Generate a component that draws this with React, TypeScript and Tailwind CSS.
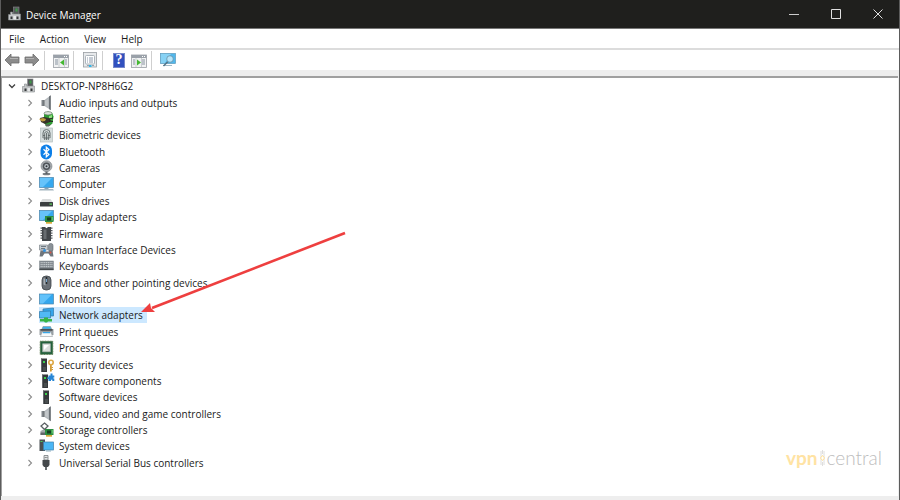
import React from "react";

type Glyph = () => React.ReactElement;

const Svg = ({ children }: { children: React.ReactNode }) => (
  <svg viewBox="0 0 16 16" className="size-4 shrink-0" aria-hidden="true">
    {children}
  </svg>
);

const Root: Glyph = () => (
  <Svg>
    <rect x="6.500" y="1" width="5.500" height="7.500" fill="#55585a" stroke="#8a8d8f" strokeWidth=".6" />
    <rect x="8.500" y="2.500" width="2" height="3" fill="#3f9a48" />
    <path d="M1.500 8.500h2V6h2v2h8v6h-12z" fill="#c3c5c7" stroke="#85898c" strokeWidth=".6" />
    <path d="M3.500 10.500h2V13h-2zM9.500 10.500h2V13h-2z" fill="#35383a" />
    <path d="M6.500 10H9v3.500H6.500z" fill="#e6e8e9" />
  </Svg>
);

const Speaker: Glyph = () => (
  <Svg>
    <path d="M2.500 5h3v6h-3z" fill="#80858a" />
    <path d="M5.500 5l6-4.500v14.500l-6-4z" fill="#b3b8bc" />
    <path d="M10 1.600l1.800-1.300v15L10 14z" fill="#6a6f74" />
    <path d="M6 6l3-2v7.500L6 10z" fill="#c2c6c9" />
    <path d="M5 5v6" stroke="#5d6266" strokeWidth=".8" />
  </Svg>
);

const Battery: Glyph = () => (
  <Svg>
    <path d="M5 2l4-1.500 4 1 1.500 4-1 7-3 2.500H7L5 11z" fill="#2f9e33" />
    <ellipse cx="9" cy="2.300" rx="4" ry="1.700" fill="#dbe3da" stroke="#667066" strokeWidth=".6" />
    <path d="M10 5l3-1v4l-3 1z" fill="#8de07c" />
    <path d="M6 13.500l6-.5-2 2.500H7z" fill="#5b675c" />
    <path d="M1 7l4-1 5 1 2 2-1 2-5 2-4-2z" fill="#37332a" />
    <path d="M0 8l4-1 3 1-1 2-3 .5z" fill="#c19c3e" />
    <path d="M10 8l4-1M10 10l4 .5" stroke="#222" strokeWidth="1" />
  </Svg>
);

const Finger: Glyph = () => (
  <Svg>
    <rect x="1.500" y="1" width="12" height="14" fill="#d5dddd" stroke="#b4bebe" strokeWidth=".7" />
    <path d="M4 11V6a3.500 3.500 0 0 1 7 0v5M5.700 13V6.500a1.800 1.800 0 0 1 3.600 0V13M7.500 6v7M4 8.500h2M9 8.500h2M4.500 11h6" fill="none" stroke="#5d6868" strokeWidth=".9" />
  </Svg>
);

const Bluetooth: Glyph = () => (
  <Svg>
    <rect x="1.500" y=".5" width="11.500" height="15" rx="5.700" fill="#0c7fe8" />
    <path d="M4.500 5.300l5.400 5.200-2.600 2.300V3.200l2.600 2.300-5.400 5.200" fill="none" stroke="#fff" strokeWidth="1.200" />
  </Svg>
);

const Camera: Glyph = () => (
  <Svg>
    <ellipse cx="7.500" cy="14" rx="4" ry="1.300" fill="#777c80" />
    <path d="M6.500 11h2v3h-2z" fill="#5d6266" />
    <circle cx="7.500" cy="6.200" r="5.500" fill="#a4a9ad" stroke="#7b8084" strokeWidth=".6" />
    <circle cx="7.500" cy="6.200" r="3.700" fill="#4e5358" />
    <circle cx="7.500" cy="6.200" r="2.200" fill="#bcc3c9" />
    <circle cx="7.500" cy="6.200" r="1" fill="#30353a" />
  </Svg>
);

const Screen = () => (
  <>
    <rect x=".5" y="1.500" width="14" height="10" fill="#36a8ee" stroke="#4d87ad" strokeWidth=".7" />
    <path d="M1 2h12L4 11H1z" fill="#66c3fa" />
  </>
);

const Computer: Glyph = () => (
  <Svg>
    <Screen />
    <path d="M5.500 12h4v1h-4z" fill="#83a2b5" />
    <path d="M1 13h13l1 1.500H0z" fill="#a3b5c0" />
  </Svg>
);

const Disk: Glyph = () => (
  <Svg>
    <path d="M3.500 6h8l2.500 3.500H1z" fill="#d9dbdc" />
    <rect x="1" y="9" width="13" height="4.500" rx=".5" fill="#3b3e40" />
    <rect x="10.500" y="10.500" width="2.500" height="1.200" fill="#5fd45b" />
  </Svg>
);

const Chip = () => (
  <>
    <rect x="6" y="7" width="8.500" height="6" fill="#2c8f42" />
    <rect x="8" y="8.500" width="4" height="3" fill="#153f22" />
    <rect x="12.700" y="8" width="1" height="3.500" fill="#6fd47b" />
    <path d="M7 13h6v1.700H7z" fill="#d9a93a" />
  </>
);

const Display: Glyph = () => (
  <Svg>
    <Screen />
    <Chip />
  </Svg>
);

const Firmware: Glyph = () => (
  <Svg>
    <path d="M1.500 1.500h2v1.300h-2zM1.500 4h2v1.300h-2zM1.500 6.500h2v1.300h-2zM1.500 9h2v1.300h-2zM1.500 11.500h2v1.300h-2zM11.500 1.500h2v1.300h-2zM11.500 4h2v1.300h-2zM11.500 6.500h2v1.300h-2zM11.500 9h2v1.300h-2zM11.500 11.500h2v1.300h-2z" fill="#555a5e" />
    <path d="M3 1h3l1.500 1.300L9 1h3v14H3z" fill="#43474b" />
    <path d="M4.500 3.500h3V13h-3z" fill="#686d71" />
  </Svg>
);

const Hid: Glyph = () => (
  <Svg>
    <path d="M.5 3h8v5h-8z" fill="#c8cdd1" stroke="#80878c" strokeWidth=".7" />
    <path d="M2 4h5v1H2zM2 6h4v1H2z" fill="#6f7a83" />
    <rect x="9.500" y="1.500" width="4.500" height="8" rx="2" fill="#8b9298" stroke="#60676d" strokeWidth=".6" />
    <path d="M.5 14.500l1-6h3l1 1h4l1-1h3l1 6h-3l-2-3h-4l-2 3z" fill="#70767c" />
    <circle cx="5.500" cy="8.500" r="1.500" fill="#3290df" />
    <circle cx="11.500" cy="10.500" r="1" fill="#d95548" />
  </Svg>
);

const Keyboard: Glyph = () => (
  <Svg>
    <rect x=".5" y="3" width="14" height="9" fill="#7d848a" stroke="#8d9499" strokeWidth=".6" />
    <path d="M1.500 4.700h12M1.500 6.700h12M1.500 8.700h12" stroke="#d0d5d9" strokeWidth="1" strokeDasharray="1.300 .5" />
    <path d="M.5 10.500h14V12H.500z" fill="#464b4f" />
  </Svg>
);

const Mouse: Glyph = () => (
  <Svg>
    <rect x="3" y="1" width="9" height="14" rx="4" fill="#6a7076" stroke="#3f454a" strokeWidth=".8" />
    <path d="M4.500 3.500h2v7l-2-1z" fill="#a4abb1" />
    <path d="M7.500 2v7" stroke="#252a2e" strokeWidth="1.500" />
    <rect x="7" y="4" width="1" height="3" fill="#76a8d0" />
  </Svg>
);

const Monitor: Glyph = () => (
  <Svg>
    <rect x=".5" y="3" width="14" height="10" fill="#33a7ee" stroke="#4d87ad" strokeWidth=".7" />
    <path d="M1 3.500h12L4 12.500H1z" fill="#62c2fa" />
  </Svg>
);

const Network: Glyph = () => (
  <Svg>
    <path d="M4 2l10.500-1v8L4 9z" fill="#35a5ea" stroke="#2f78a8" strokeWidth=".7" />
    <path d="M.5 4.500l11-.5v7H.500z" fill="#51b9f5" stroke="#2f78a8" strokeWidth=".7" />
    <path d="M5 10.500h4V12h4v2.500H9l-1 1h-2l-1-1H1V12h4z" fill="#35b445" />
  </Svg>
);

const Printer: Glyph = () => (
  <Svg>
    <path d="M4 2.500h7.500l1 2.500h-9.500z" fill="#39b1ec" stroke="#8a9297" strokeWidth=".6" />
    <path d="M.5 5h14v6H.500z" fill="#9aa0a4" />
    <path d="M1.500 5h12v1.800h-12z" fill="#4b5156" />
    <path d="M3 8h9l1.500 4.500h-12z" fill="#f7f9fa" stroke="#868c91" strokeWidth=".5" />
    <path d="M4 8h7l.4 1.300H3.600z" fill="#38a7e8" />
  </Svg>
);

const Processor: Glyph = () => (
  <Svg>
    <rect x="1.200" y="1.200" width="12.600" height="13.200" fill="#24613d" stroke="#5f7d52" strokeWidth="1" strokeDasharray="1 .6" />
    <rect x="3.700" y="3.800" width="7.600" height="8" fill="#dcdfdd" stroke="#a8b1ab" strokeWidth=".7" />
    <path d="M5 5h5l-5 5z" fill="#fff" />
  </Svg>
);

const Tower = ({ x = 3 }: { x?: number }) => (
  <>
    <rect x={x} y="1.500" width="6" height="13.500" fill="#36393b" />
    <path d={`M${x} 1.500h1V15h-1z`} fill="#65696c" />
    <rect x={x + 2} y="4" width="2" height="2" fill="#3dcf4c" />
    <path d={`M${x + 2} 11h3M${x + 2} 13h3`} stroke="#7b7f82" strokeWidth=".6" />
  </>
);

const Security: Glyph = () => (
  <Svg>
    <Tower x={2} />
    <path d="M11 7h1.800v7l-.9 1-.9-1z" fill="#d29a35" />
    <circle cx="12" cy="5.500" r="2.200" fill="none" stroke="#dda947" strokeWidth="1.600" />
    <path d="M12.500 10h1.500v1h-1.500zM12.500 12h1.500v1h-1.500z" fill="#d29a35" />
  </Svg>
);

const Component: Glyph = () => (
  <Svg>
    <Tower />
    <path d="M9.500 2.500h2V.500h2v2h1.800v2h-1v1h1V8h-2V6.800h-1.300V8H9.500V6H8.300V4.300h1.200z" fill="#2685d5" />
  </Svg>
);

const Software: Glyph = () => (
  <Svg>
    <Tower x={4} />
  </Svg>
);

const Storage: Glyph = () => (
  <Svg>
    <path d="M5.500 1L9 4 5.500 7.500 2 4z" fill="#fff" stroke="#5b6063" strokeWidth="1.300" />
    <path d="M1.500 9l3-1.500L8 9v4H1.500z" fill="#a3a8ab" />
    <path d="M1.500 10.500H7V13H1.500z" fill="#63686b" />
    <Chip />
  </Svg>
);

const System: Glyph = () => (
  <Svg>
    <rect x=".5" y="1.500" width="5.500" height="11.500" fill="#4a5054" />
    <rect x="1.500" y="3" width="2" height="1" fill="#51ce5c" />
    <rect x="4.500" y="4" width="10" height="8" fill="#4bb6f5" stroke="#3f80ac" strokeWidth=".7" />
    <path d="M7 12.500h5v1H7z" fill="#8faebf" />
  </Svg>
);

const Usb: Glyph = () => (
  <Svg>
    <path d="M5 .5h4V5H5z" fill="#e2e4e5" stroke="#777c7f" strokeWidth=".8" />
    <path d="M5.800 2h.8v1h-.8zM7.500 2h.8v1h-.8z" fill="#555" />
    <path d="M3.500 5h7v5L9 12H5l-1.500-2z" fill="#45494c" />
    <path d="M6 12h2v3H6z" fill="#696e71" />
  </Svg>
);

const devices: { name: string; Icon: Glyph; selected?: boolean }[] = [
  { name: "Audio inputs and outputs", Icon: Speaker },
  { name: "Batteries", Icon: Battery },
  { name: "Biometric devices", Icon: Finger },
  { name: "Bluetooth", Icon: Bluetooth },
  { name: "Cameras", Icon: Camera },
  { name: "Computer", Icon: Computer },
  { name: "Disk drives", Icon: Disk },
  { name: "Display adapters", Icon: Display },
  { name: "Firmware", Icon: Firmware },
  { name: "Human Interface Devices", Icon: Hid },
  { name: "Keyboards", Icon: Keyboard },
  { name: "Mice and other pointing devices", Icon: Mouse },
  { name: "Monitors", Icon: Monitor },
  { name: "Network adapters", Icon: Network, selected: true },
  { name: "Print queues", Icon: Printer },
  { name: "Processors", Icon: Processor },
  { name: "Security devices", Icon: Security },
  { name: "Software components", Icon: Component },
  { name: "Software devices", Icon: Software },
  { name: "Sound, video and game controllers", Icon: Speaker },
  { name: "Storage controllers", Icon: Storage },
  { name: "System devices", Icon: System },
  { name: "Universal Serial Bus controllers", Icon: Usb },
];

const Arrow = () => (
  <svg viewBox="0 0 208 88" className="pointer-events-none absolute bottom-2 left-[136px] z-10 h-[88px] w-[208px]" aria-hidden="true">
    <path d="M14 80L207 5" stroke="#ee3f3f" strokeWidth="2.600" />
    <path d="M3 84l9-9 1 5 4 4z" fill="#ee3f3f" />
  </svg>
);

const NavArrow = ({ flip }: { flip?: boolean }) => (
  <Svg>
    <path
      d={flip ? "M15 8L9 2v3H1v6h8v3z" : "M1 8l6-6v3h8v6H7v3z"}
      fill="#8c8c8c"
      stroke="#6c6c6c"
      strokeWidth=".8"
    />
    <path d={flip ? "M2 6.500h8" : "M6 6.500h8"} stroke="#b2b2b2" strokeWidth="1" />
  </Svg>
);

const Pane = ({ right }: { right?: boolean }) => (
  <Svg>
    <rect x=".5" y="3" width="15" height="12.500" fill="#f1f2f3" stroke="#999fa5" strokeWidth=".8" />
    <path d="M.5 3h15v3H.500z" fill="#9aa1a9" />
    <path d="M11 4h1v1h-1zM13 4h1v1h-1z" fill="#fff" />
    <path d={right ? "M2 8h2M2 10h2M2 12h2M11 8h3M11 10h3M11 12h3" : "M2 8h3M2 10h3M2 12h3M12 8h2M12 10h2M12 12h2"} stroke="#8793a0" strokeWidth="1" />
    <path d={right ? "M5 6v9M10.500 6v9" : "M6 6v9M11.500 6v9"} stroke="#b0b6bb" strokeWidth=".6" />
    <path d={right ? "M6 7.500l4 3-4 3z" : "M11 7.500l-4 3 4 3z"} fill="#43b831" />
  </Svg>
);

const Properties = () => (
  <Svg>
    <rect x="1.500" y=".5" width="13" height="14.500" fill="#e7e9eb" stroke="#9a9fa3" strokeWidth=".8" />
    <rect x="3.500" y="3.500" width="9" height="8.500" rx="1" fill="#fff" stroke="#9aa3ac" strokeWidth=".8" />
    <path d="M5 6h1M5 8h1M5 10h1M7 6h4M7 8h4M7 10h4" stroke="#7d8da0" strokeWidth=".9" />
    <path d="M5 13.500h2M10 13.500h2" stroke="#8e9ba5" strokeWidth=".9" />
    <path d="M7 13h2.500v2H7z" fill="#31b6e9" />
  </Svg>
);

const Help = () => (
  <span className="flex h-[15px] w-3 items-center justify-center border border-[#7788c9] bg-[#3150be] font-['Liberation_Serif',serif] text-[14px] leading-none font-bold text-white">
    ?
  </span>
);

const Scan = () => (
  <Svg>
    <rect x=".5" y="1.500" width="15" height="10" fill="#50b7ec" stroke="#5d9abb" strokeWidth=".7" />
    <path d="M1 2h10L5 11H1z" fill="#86d2f5" />
    <path d="M3 13h9v1H3z" fill="#a2bac7" />
    <path d="M8 9.500L3.500 14" stroke="#527285" strokeWidth="1.500" />
    <circle cx="10" cy="7" r="3.300" fill="#b5e5fa" stroke="#648fa6" strokeWidth=".8" />
  </Svg>
);

const Tool = ({ label, children }: { label: string; children: React.ReactNode }) => (
  <button aria-label={label} className="flex w-4 shrink-0 justify-center">
    {children}
  </button>
);

const Divider = () => <span className="mr-1 h-[19px] w-px bg-[#cfcfcf]" />;

const Chevron = ({ open }: { open?: boolean }) => (
  <svg viewBox="0 0 8 8" className="size-2 shrink-0" fill="none" aria-hidden="true">
    {open ? (
      <path d="M1 2.500l3 3 3-3" stroke="#404040" strokeWidth="1.300" />
    ) : (
      <path d="M2.500 1l3 3-3 3" stroke="#8c8c8c" strokeWidth="1.100" />
    )}
  </svg>
);

export default function App() {
  return (
    <div className="flex h-screen flex-col border-x border-[#5c5c5c] bg-[#eeeeee] font-['Open_Sans','Noto_Sans',sans-serif] text-[10px] text-[#1a1a1a]">
      <header className="flex h-[29px] shrink-0 items-center border-b border-[#777] bg-[#1f1f1d] pl-[6px] text-white">
        <Root />
        <h1 className="ml-[3px] flex-1 pt-[2px]">Device Manager</h1>
        <button aria-label="Minimize" className="flex h-full w-[42px] items-center justify-center">
          <svg viewBox="0 0 10 10" className="size-[10px]"><path d="M0 5.500h10" stroke="#ccc" /></svg>
        </button>
        <button aria-label="Maximize" className="flex h-full w-[42px] items-center justify-center">
          <svg viewBox="0 0 10 10" className="size-[10px]"><path d="M.5.500h9v9h-9z" fill="none" stroke="#e0e0e0" /></svg>
        </button>
        <button aria-label="Close" className="flex h-full w-[42px] items-center justify-center">
          <svg viewBox="0 0 10 10" className="size-[10px]"><path d="M.5.500l9 9M9.500.500l-9 9" stroke="#e0e0e0" /></svg>
        </button>
      </header>
      <nav className="flex h-[21px] shrink-0 items-center gap-[15px] border-b-2 border-[#dcdcdc] bg-white pt-px pl-2">
        <button>File</button>
        <button>Action</button>
        <button>View</button>
        <button>Help</button>
      </nav>
      <div className="flex h-5 shrink-0 items-center gap-1 bg-white pl-[3px]">
        <Tool label="Back"><NavArrow /></Tool>
        <Tool label="Forward"><NavArrow flip /></Tool>
        <Divider />
        <Tool label="Console tree"><Pane /></Tool>
        <Divider />
        <Tool label="Properties"><Properties /></Tool>
        <Divider />
        <Tool label="Help"><Help /></Tool>
        <Tool label="Action pane"><Pane right /></Tool>
        <Divider />
        <Tool label="Scan for hardware changes"><Scan /></Tool>
      </div>
      <main className="relative mt-[6px] mr-px mb-1 flex min-h-0 flex-1 flex-col border-t-2 border-l border-[#a0a0a0] bg-white pb-[25px]">
        <ul className="flex min-h-0 flex-1 flex-col leading-4">
          <li className="flex min-h-0 flex-1 items-center pl-[6px]">
            <button aria-label="Collapse" className="flex"><Chevron open /></button>
            <span className="ml-[5px] flex items-center gap-1"><Root />DESKTOP-NP8H6G2</span>
          </li>
          {devices.map(({ name, Icon, selected }) => (
            <li key={name} className="relative flex min-h-0 flex-1 items-center pl-6">
              <button aria-label={`Expand ${name}`} className="flex"><Chevron /></button>
              <span className={`ml-[5px] flex items-center gap-1 pr-1 ${selected ? "bg-[#cce8ff]" : ""}`}>
                <Icon />
                {name}
              </span>
              {selected && <Arrow />}
            </li>
          ))}
        </ul>
        <div className="absolute right-4 bottom-7 flex items-center gap-[2px] font-['Lato',sans-serif] text-[19px] leading-5">
          <span className="font-bold text-[#ffe3a3]">vpn</span>
          <svg viewBox="0 0 5 18" className="h-[18px] w-[5px]" aria-hidden="true">
            <path d="M1 2v14M4 2v14M2.500 1v4M2.500 13v4" stroke="#dedede" strokeWidth="1" />
            <path d="M2.500 6.500l2 2.500-2 2.500-2-2.500z" fill="#fff" stroke="#ffdf95" />
          </svg>
          <span className="font-light text-[#bdbdbd]">central</span>
        </div>
      </main>
    </div>
  );
}
